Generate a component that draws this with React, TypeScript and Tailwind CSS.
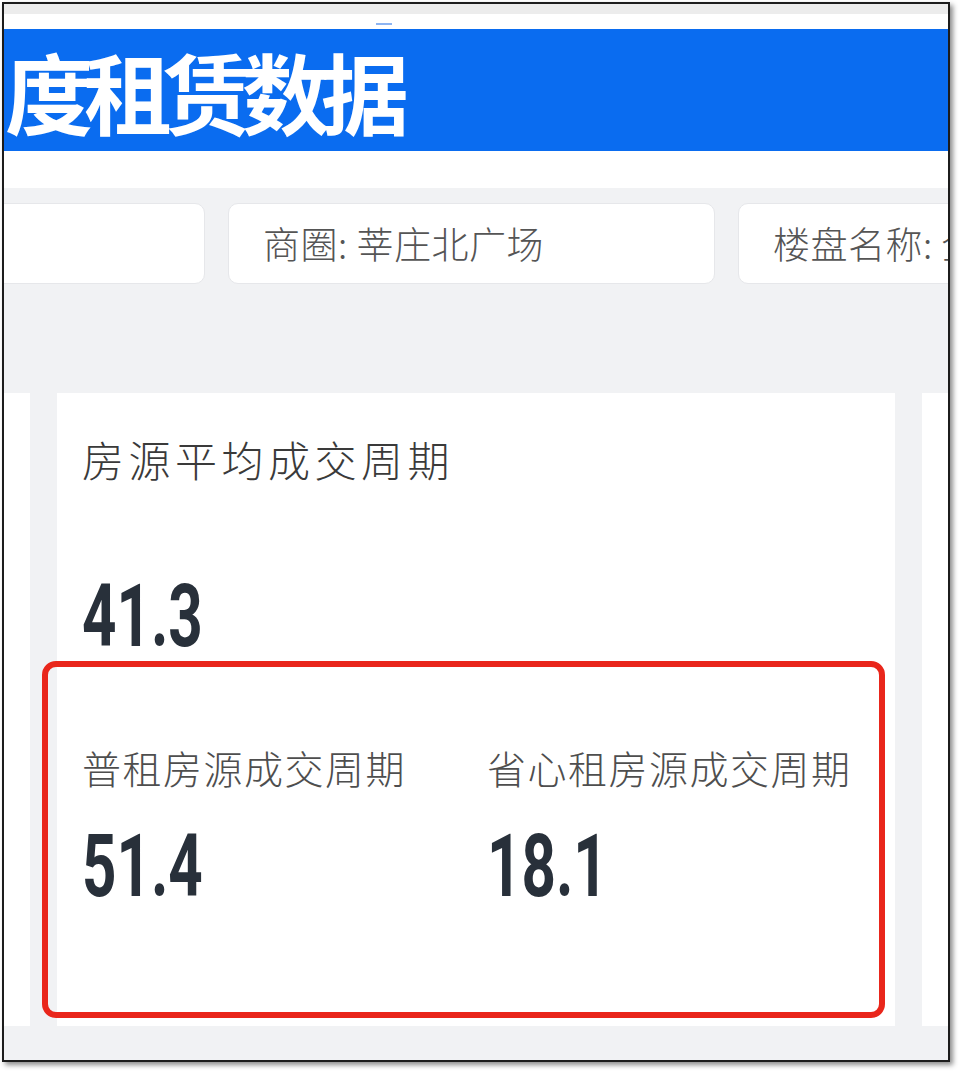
import React from 'react';

const cjk = "font-['Noto_Sans_CJK_SC',sans-serif]";
const num = "font-['Roboto','Liberation_Sans',sans-serif]";

const chips = [
  { label: '', width: 'w-[300px]' },
  { label: '商圈: 莘庄北广场', width: 'w-[487px]' },
  { label: '楼盘名称: 全部', width: 'w-[487px]' },
];

const Metric = ({ label, value }: { label: string; value: string }) => (
  <div className="flex flex-col">
    <p className={`${cjk} text-[39px] leading-none font-light tracking-[1.5px] text-[#4e4e4e] whitespace-nowrap`}>{label}</p>
    <p className={`${num} mt-[36px] text-[87px] leading-none font-bold text-[#28303a] inline-block origin-left scale-x-[0.69]`}>
      {value}
    </p>
  </div>
);

export default function App() {
  return (
    <div className="w-[960px] h-[1072px] bg-white pt-[2px] pl-[2px]">
      <div className="w-[948px] h-[1060px] border-2 border-[#1c1c1c] shadow-[3px_3px_5px_rgba(0,0,0,0.45)] overflow-hidden flex flex-col bg-white">
        {/* status strip */}
        <div className="h-[10px] bg-[#ececec] shrink-0" />
        <div className="h-[15px] shrink-0 pl-[372px] pt-[9px]">
          <div className="w-[16px] h-[2px] bg-[#8db4f2]" />
        </div>

        {/* banner */}
        <div className="h-[122px] shrink-0 bg-[#0a6cf0] flex items-center pl-[1px]">
          <h1 className={`${cjk} text-[88px] leading-none font-bold tracking-[-9px] text-white whitespace-nowrap`}>
            度租赁数据
          </h1>
        </div>
        <div className="h-[37px] shrink-0 bg-white" />

        {/* content */}
        <div className="flex-1 bg-[#f1f2f4] pt-[15px]">
          <div className="flex gap-[23px] -ml-[99px]">
            {chips.map((c, i) => (
              <div
                key={i}
                className={`${c.width} h-[81px] shrink-0 bg-white rounded-[10px] border border-[#e6e7ea] flex items-center pl-[34px]`}
              >
                <span className={`${cjk} text-[37px] leading-none font-light tracking-[0.5px] text-[#555] whitespace-nowrap`}>
                  {c.label}
                </span>
              </div>
            ))}
          </div>

          <div className="flex gap-[27px] -ml-[174px] mt-[109px]">
            <div className="w-[200px] h-[633px] shrink-0 bg-white" />

            <div className="relative w-[838px] h-[633px] shrink-0 bg-white pl-[25px] pt-[45px]">
              <h2 className={`${cjk} text-[42px] leading-none font-light tracking-[4.5px] text-[#3a3a3a] whitespace-nowrap`}>
                房源平均成交周期
              </h2>
              <p className={`${num} mt-[93px] text-[87px] leading-none font-bold text-[#28303a] inline-block origin-left scale-x-[0.69]`}>
                41.3
              </p>

              <div className="grid grid-cols-[405px_1fr] mt-[88px]">
                <Metric label="普租房源成交周期" value="51.4" />
                <Metric label="省心租房源成交周期" value="18.1" />
              </div>

              {/* annotation */}
              <div className="absolute left-[-15px] top-[268px] w-[843px] h-[357px] border-[6px] border-[#e9261b] rounded-[14px] pointer-events-none" />
            </div>

            <div className="w-[200px] h-[633px] shrink-0 bg-white" />
          </div>
        </div>
      </div>
    </div>
  );
}
